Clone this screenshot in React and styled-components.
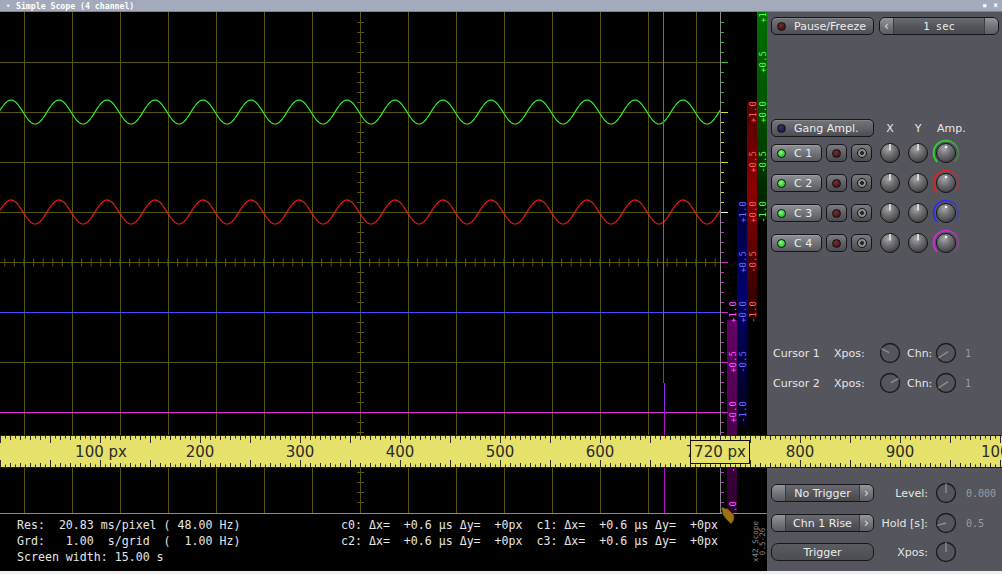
import React from 'react'
import styled, { createGlobalStyle } from 'styled-components'

const MONO = `"DejaVu Sans Mono", "Liberation Mono", monospace`
const SANS = `"DejaVu Sans", "Liberation Sans", sans-serif`

const GlobalStyle = createGlobalStyle`
  html, body {
    margin: 0;
    padding: 0;
    background: #efefef;
  }
  #root {
    width: 1002px;
    height: 574px;
    overflow: hidden;
  }
`

const Window = styled.div`
  width: 1002px;
  height: 574px;
  display: flex;
  flex-direction: column;
  background: #efefef;
  overflow: hidden;
`

const TitleBar = styled.div`
  flex-shrink: 0;
  height: 11px;
  border-bottom: 1px solid #7c8292;
  background: #a3aabb;
  display: flex;
  align-items: center;
  padding: 0 4px 0 6px;
  color: #fff;
  font: bold 8.2px ${MONO};

  .arrow {
    width: 10px;
    font-size: 7px;
  }
  .title {
    flex: 1;
    white-space: pre;
  }
  .btns {
    display: flex;
    gap: 6px;
    font-size: 8px;
  }
`

const Body = styled.div`
  position: relative;
  display: flex;
  height: 559px;
  flex-shrink: 0;
`

const ScopeColumn = styled.div`
  width: 767px;
  display: flex;
  flex-direction: column;
  background: #000;
`

const ScopeSvg = styled.svg`
  display: block;
`

const Info = styled.div`
  height: 57px;
  box-sizing: border-box;
  padding-top: 3px;
  display: flex;
  background: #000;
  color: #e6e6e6;
  font: 11.6px/16px ${MONO};
  white-space: pre;
`

const InfoBlock = styled.div`
  width: ${p => p.$w}px;
  margin-left: ${p => p.$ml || 0}px;
`

const Version = styled.div`
  margin-left: auto;
  margin-right: 1px;
  align-self: center;
  margin-top: -4px;
  writing-mode: vertical-rl;
  transform: rotate(180deg);
  text-align: center;
  color: #8a8a8a;
  font: 7.6px/7px ${MONO};
`

const Panel = styled.div`
  width: 235px;
  box-sizing: border-box;
  padding-left: 4px;
  display: flex;
  flex-direction: column;
  background: #54555d;
  font-family: ${SANS};
  font-size: 11px;
  color: #e6e6e6;
`

const Row = styled.div`
  display: flex;
  align-items: center;
  flex-shrink: 0;
  height: ${p => p.$h || 18}px;
  margin-top: ${p => p.$mt || 0}px;
`

const Btn = styled.div`
  box-sizing: border-box;
  width: ${p => p.$w || 103}px;
  height: 18px;
  flex-shrink: 0;
  display: flex;
  align-items: center;
  gap: 8px;
  padding-left: 5px;
  margin-right: ${p => p.$mr || 0}px;
  border: 1px solid #16161a;
  border-radius: 5px;
  background: ${p => p.$light
    ? 'linear-gradient(to bottom, #909197 0%, #737479 50%, #58595f 100%)'
    : 'linear-gradient(to bottom, #74757b 0%, #626369 50%, #4d4e54 100%)'};
  box-shadow: inset 0 1px 0 rgba(255, 255, 255, 0.12);
  color: #ececec;
`

const SmallBtn = styled.div`
  box-sizing: border-box;
  width: 21px;
  height: 18px;
  flex-shrink: 0;
  margin-left: 4px;
  display: flex;
  align-items: center;
  justify-content: center;
  border: 1px solid #16161a;
  border-radius: 5px;
  background: linear-gradient(to bottom, #7a7b81 0%, #5e5f65 55%, #4a4b51 100%);
`

const Led = styled.span`
  box-sizing: border-box;
  width: 9px;
  height: 9px;
  flex-shrink: 0;
  border-radius: 50%;
  border: 1px solid #111;
  background: radial-gradient(circle at 40% 35%, ${p => p.$hi}, ${p => p.$color} 70%);
`

const RingLed = styled.span`
  box-sizing: border-box;
  width: 10px;
  height: 10px;
  border-radius: 50%;
  border: 1.5px solid #141414;
  background: radial-gradient(circle, #262626 0 1.7px, #8c8c8c 2.2px);
`

const Select = styled.div`
  box-sizing: border-box;
  width: ${p => p.$w}px;
  height: 18px;
  flex-shrink: 0;
  display: flex;
  overflow: hidden;
  border: 1px solid #16161a;
  border-radius: 6px;
`

const SelEnd = styled.div`
  width: 13px;
  display: flex;
  align-items: center;
  justify-content: center;
  color: #e0e0e0;
  font-size: 12px;
  background: linear-gradient(to bottom, #95969c 0%, #75767c 50%, #5c5d63 100%);
  ${p => p.$right ? 'border-left: 1px solid #3b3c41;' : 'border-right: 1px solid #3b3c41;'}
`

const SelMid = styled.div`
  flex: 1;
  display: flex;
  align-items: center;
  justify-content: center;
  color: #ececec;
  font-family: ${p => p.$mono ? MONO : SANS};
  font-size: ${p => p.$mono ? '10.5px' : '11px'};
  background: linear-gradient(to bottom, #6a6b71 0%, #54555b 55%, #48494f 100%);
`

const TrigBtn = styled.div`
  box-sizing: border-box;
  width: 103px;
  height: 18px;
  flex-shrink: 0;
  display: flex;
  align-items: center;
  justify-content: center;
  border: 1px solid #17171b;
  border-radius: 7px;
  background: linear-gradient(to bottom, #5a5b61, #4c4d53);
  color: #ececec;
`

const Cell = styled.div`
  width: ${p => p.$w || 28}px;
  height: 18px;
  flex-shrink: 0;
  display: flex;
  align-items: center;
  justify-content: ${p => p.$start ? 'flex-start' : 'center'};
  padding-left: ${p => p.$pl || 0}px;
  box-sizing: border-box;
  margin-left: ${p => p.$ml || 0}px;
  color: #e6e6e6;
  white-space: nowrap;
`

const Label = styled.div`
  width: ${p => p.$w}px;
  flex-shrink: 0;
  margin-left: ${p => p.$ml || 0}px;
  margin-right: ${p => p.$mr || 0}px;
  text-align: ${p => p.$right ? 'right' : 'left'};
  white-space: nowrap;
  color: #e6e6e6;
`

const Value = styled.div`
  margin-left: ${p => p.$ml || 8}px;
  font: 10px ${MONO};
  color: #9c9c9c;
`

const Ruler = styled.svg`
  position: absolute;
  left: 0;
  top: 423px;
  display: block;
`

const Pointer = styled.svg`
  position: absolute;
  left: 719px;
  top: 494px;
`

const BottomStrip = styled.div`
  height: 3px;
  background: #efefef;
`

// ---------- scope drawing ----------

const GRID = '#58580c'
const wave = (cy) =>
  Array.from({ length: 721 }, (_, x) =>
    `${x},${(cy - 12 * Math.cos((2 * Math.PI * (x - 11)) / 48)).toFixed(2)}`
  ).join(' ')

const bands = [
  { x: 757, center: 100, top: 0, bottom: 208, id: 'bg', label: '#4cff4c',
    stops: [['0', '#007000'], ['0.45', '#005400'], ['1', '#001a00']] },
  { x: 747, center: 200, top: 90, bottom: 306, id: 'br', label: '#ff5a5a',
    stops: [['0', '#520000'], ['0.4', '#8c0000'], ['1', '#260000']] },
  { x: 737, center: 300, top: 190, bottom: 415, id: 'bb', label: '#6a6aff',
    stops: [['0', '#00003c'], ['0.4', '#00006c'], ['1', '#00001a']] },
  { x: 727, center: 400, top: 308, bottom: 501, id: 'bm', label: '#ff50ff',
    stops: [['0', '#640064'], ['0.6', '#4a004a'], ['1', '#2a002a']] },
]
const bandLabels = ['+1.0', '+0.5', '+0.0', '-0.5', '-1.0']

const tickColor = (y) => {
  if (y < 100) return '#22c822'
  if (y < 200) return '#dede22'
  if (y === 200) return '#ffffff'
  return '#e020e0'
}

const Scope = () => {
  const vLines = Array.from({ length: 15 }, (_, k) => 24.5 + 48 * k)
  const hLines = Array.from({ length: 9 }, (_, k) => 50.5 + 50 * k)
  const vTicks = Array.from({ length: 49 }, (_, k) => 10 * (k + 1) + 0.5)
  const hTicks = Array.from({ length: 78 }, (_, k) => 4.8 + 9.6 * k).filter(x => x < 720)
  const rTicks = Array.from({ length: 50 }, (_, k) => 10 * (k + 1))

  return (
    <ScopeSvg width="767" height="502" viewBox="0 0 767 502">
      <defs>
        {bands.map(b => (
          <linearGradient key={b.id} id={b.id} x1="0" y1="0" x2="0" y2="1">
            {b.stops.map(([o, c]) => <stop key={o} offset={o} stopColor={c} />)}
          </linearGradient>
        ))}
      </defs>

      {bands.map(b => (
        <rect key={b.id} x={b.x} y={b.top} width="10" height={b.bottom - b.top} fill={`url(#${b.id})`} />
      ))}
      {bands.map(b => bandLabels.map((t, i) => {
        const cx = b.x + 5.5
        const cy = b.center - 100 + 50 * i
        return (
          <text key={b.id + t} x={cx} y={cy} transform={`rotate(-90 ${cx} ${cy})`}
            textAnchor="middle" dominantBaseline="central"
            fontFamily={MONO} fontSize="9" fill={b.label}>{t}</text>
        )
      }))}

      {vLines.map(x => <line key={'v' + x} x1={x} y1="0" x2={x} y2="501" stroke={GRID} />)}
      {hLines.map(y => <line key={'h' + y} x1="0" y1={y} x2="720" y2={y} stroke={GRID} />)}
      {vTicks.map(y => <line key={'vt' + y} x1="357" y1={y} x2="364" y2={y} stroke={GRID} />)}
      {hTicks.map(x => <line key={'ht' + x} x1={x} y1="246.5" x2={x} y2="254.5" stroke={GRID} />)}

      <polyline points={wave(100)} fill="none" stroke="#2ef02e" strokeWidth="1.2" />
      <polyline points={wave(200)} fill="none" stroke="#e61c1c" strokeWidth="1.2" />
      <line x1="0" y1="300.5" x2="720" y2="300.5" stroke="#4848ff" />
      <line x1="0" y1="400.5" x2="720" y2="400.5" stroke="#e030e0" />

      <line x1="663.5" y1="0" x2="663.5" y2="348" stroke="#6e6a8a" />
      <line x1="663.5" y1="348" x2="663.5" y2="371" stroke="#7a2ad8" />
      <line x1="664.5" y1="371" x2="664.5" y2="400" stroke="#8a30f0" />
      <line x1="664.5" y1="400" x2="664.5" y2="501" stroke="#b010c0" />

      <line x1="720.5" y1="0" x2="720.5" y2="501" stroke="#8a8a8a" />
      {rTicks.map(y => (
        <line key={'rt' + y} x1="721" y1={y + 0.5} x2={y % 50 === 0 ? 728 : 724} y2={y + 0.5}
          stroke={tickColor(y)} />
      ))}
      <line x1="0" y1="501.5" x2="767" y2="501.5" stroke="#8a8a8a" />
    </ScopeSvg>
  )
}

const RulerBar = () => {
  const ticks = Array.from({ length: 201 }, (_, k) => k * 5)
  const labels = [200, 300, 400, 500, 600, 700, 800, 900, 1000]
  return (
    <Ruler width="1002" height="33" viewBox="0 0 1002 33">
      <rect x="0" y="0" width="1002" height="33" fill="#e5e16b" />
      <line x1="0" y1="0.5" x2="1002" y2="0.5" stroke="#1c1c1c" />
      <line x1="0" y1="32.5" x2="1002" y2="32.5" stroke="#1c1c1c" />
      {ticks.map(x => {
        const len = x % 50 === 0 ? 7 : x % 10 === 0 ? 4 : 2.5
        return (
          <g key={x} stroke="#2a2a2a">
            <line x1={x + 0.5} y1="1" x2={x + 0.5} y2={1 + len} />
            <line x1={x + 0.5} y1={32 - len} x2={x + 0.5} y2="32" />
          </g>
        )
      })}
      <text x="101" y="22" textAnchor="middle" fontFamily={SANS} fontSize="15" fill="#2c2c2c">100 px</text>
      {labels.map(n => (
        <text key={n} x={n} y="22" textAnchor="middle" fontFamily={SANS} fontSize="15" fill="#2c2c2c">{n}</text>
      ))}
      <rect x="690.5" y="5.5" width="59" height="23" fill="#e5e16b" stroke="#111" />
      <text x="720" y="22" textAnchor="middle" fontFamily={SANS} fontSize="15" fill="#2c2c2c">720 px</text>
    </Ruler>
  )
}

// ---------- knobs ----------

const pt = (c, r, a) => {
  const t = (a * Math.PI) / 180
  return [c + r * Math.sin(t), c - r * Math.cos(t)]
}

const Knob = ({ kind = 'solid', uid, color, angle = 0, r1 = 0, r2 = 9.5 }) => {
  if (kind === 'outline') {
    const [x1, y1] = pt(11, r1, angle)
    const [x2, y2] = pt(11, r2, angle)
    return (
      <svg width="22" height="22" viewBox="0 0 22 22">
        <circle cx="11" cy="11" r="9.5" fill="none" stroke="#1c1c1e" strokeWidth="1.4" />
        <line x1={x1} y1={y1} x2={x2} y2={y2} stroke="#8e8e8e" strokeWidth="1.4" />
      </svg>
    )
  }
  const s = kind === 'amp' ? 28 : 22
  const c = s / 2
  const a = pt(c, 12.4, -135)
  const b = pt(c, 12.4, 135)
  return (
    <svg width={s} height={s} viewBox={`0 0 ${s} ${s}`} style={{ margin: kind === 'amp' ? '-5px' : '-2px' }}>
      <defs>
        <radialGradient id={`kg-${uid}`} cx="40%" cy="28%" r="78%">
          <stop offset="0" stopColor="#a6a6aa" />
          <stop offset="0.45" stopColor="#707074" />
          <stop offset="1" stopColor="#3a3a3e" />
        </radialGradient>
        {kind === 'amp' && (
          <linearGradient id={`ka-${uid}`} x1="0" y1="0" x2="1" y2="0.4">
            <stop offset="0" stopColor={color} />
            <stop offset="0.5" stopColor={color} />
            <stop offset="1" stopColor={color} stopOpacity="0.35" />
          </linearGradient>
        )}
      </defs>
      {kind === 'amp' && (
        <path d={`M${a[0]} ${a[1]} A12.4 12.4 0 1 1 ${b[0]} ${b[1]}`} fill="none"
          stroke={`url(#ka-${uid})`} strokeWidth="1.8" />
      )}
      <circle cx={c} cy={c} r="9.5" fill={`url(#kg-${uid})`} stroke="#141414" />
      {kind === 'amp'
        ? <circle cx={c} cy={c - 6} r="1.3" fill="#f2f2f2" />
        : <line x1={c} y1={c - 9} x2={c} y2={c - 2.5} stroke="#ececec" strokeWidth="1.6" />}
    </svg>
  )
}

const channels = [
  { name: 'C 1', color: '#2ed42e' },
  { name: 'C 2', color: '#e22222' },
  { name: 'C 3', color: '#2e2ef0' },
  { name: 'C 4', color: '#d626d6' },
]

const cursors = [
  { name: 'Cursor 1', x: -63 },
  { name: 'Cursor 2', x: 63 },
]

const App = () => {
  return (
    <Window>
      <GlobalStyle />
      <TitleBar>
        <span className="arrow">▾</span>
        <span className="title">Simple Scope (4 channel)</span>
        <span className="btns"><span>▪</span><span>×</span></span>
      </TitleBar>

      <Body>
        <ScopeColumn>
          <Scope />
          <Info>
            <InfoBlock $w={324} $ml={17}>
              {'Res:  20.83 ms/pixel ( 48.00 Hz)\nGrd:   1.00  s/grid  (  1.00 Hz)\nScreen width: 15.00 s'}
            </InfoBlock>
            <InfoBlock $w={380}>
              {'c0: Δx=  +0.6 µs Δy=  +0px  c1: Δx=  +0.6 µs Δy=  +0px\nc2: Δx=  +0.6 µs Δy=  +0px  c3: Δx=  +0.6 µs Δy=  +0px'}
            </InfoBlock>
            <Version>{'x42 Scope\n0.5-26'}</Version>
          </Info>
        </ScopeColumn>

        <Panel>
          <Row $mt={5}>
            <Btn $mr={5}>
              <Led $color="#4e1010" $hi="#7a2a2a" />
              Pause/Freeze
            </Btn>
            <Select $w={120}>
              <SelEnd>‹</SelEnd>
              <SelMid $mono>1 sec</SelMid>
              <SelEnd $right />
            </Select>
          </Row>

          <Row $mt={84}>
            <Btn $mr={2}>
              <Led $color="#1a1a44" $hi="#34346a" />
              Gang Ampl.
            </Btn>
            <Cell>X</Cell>
            <Cell>Y</Cell>
            <Cell $start $pl={5} $w={34}>Amp.</Cell>
          </Row>

          {channels.map((ch, i) => (
            <Row key={ch.name} $mt={i === 0 ? 7 : 12}>
              <Btn $w={51} $light>
                <Led $color="#2cc82c" $hi="#7cff7c" />
                {ch.name}
              </Btn>
              <SmallBtn><Led $color="#4e1414" $hi="#743030" /></SmallBtn>
              <SmallBtn><RingLed /></SmallBtn>
              <Cell $ml={4}><Knob uid={`x${i}`} /></Cell>
              <Cell><Knob uid={`y${i}`} /></Cell>
              <Cell><Knob kind="amp" uid={`a${i}`} color={ch.color} /></Cell>
            </Row>
          ))}

          {cursors.map((c, i) => (
            <Row key={c.name} $h={22} $mt={i === 0 ? 90 : 8}>
              <Label $w={61} $ml={2}>{c.name}</Label>
              <Label $w={45}>Xpos:</Label>
              <Knob kind="outline" angle={c.x} r1={1} r2={9.5} />
              <Label $w={28} $ml={6}>Chn:</Label>
              <Knob kind="outline" angle={-123} r1={-2.4} r2={9.2} />
              <Value $ml={8}>1</Value>
            </Row>
          ))}

          <Row $h={20} $mt={89}>
            <Select $w={103}>
              <SelEnd />
              <SelMid>No Trigger</SelMid>
              <SelEnd $right>›</SelEnd>
            </Select>
            <Label $w={54} $mr={7} $right>Level:</Label>
            <Knob kind="outline" angle={0} r1={0} r2={9.5} />
            <Value $ml={9}>0.000</Value>
          </Row>
          <Row $h={20} $mt={10}>
            <Select $w={103}>
              <SelEnd />
              <SelMid>Chn 1 Rise</SelMid>
              <SelEnd $right>›</SelEnd>
            </Select>
            <Label $w={54} $mr={7} $right>Hold [s]:</Label>
            <Knob kind="outline" angle={-105} r1={0} r2={9} />
            <Value $ml={9}>0.5</Value>
          </Row>
          <Row $h={20} $mt={9}>
            <TrigBtn>Trigger</TrigBtn>
            <Label $w={54} $mr={7} $right>Xpos:</Label>
            <Knob kind="outline" angle={0} r1={0} r2={9.5} />
          </Row>
        </Panel>

        <RulerBar />
        <Pointer width="18" height="20" viewBox="0 0 18 20">
          <path d="M2 1 L9 3 L15 9 L15 14 L12 18 L7 13 L4 9 Z" fill="#9a7414" stroke="#3a2a04" strokeWidth="1" />
        </Pointer>
      </Body>

      <BottomStrip />
    </Window>
  )
}

export default App
